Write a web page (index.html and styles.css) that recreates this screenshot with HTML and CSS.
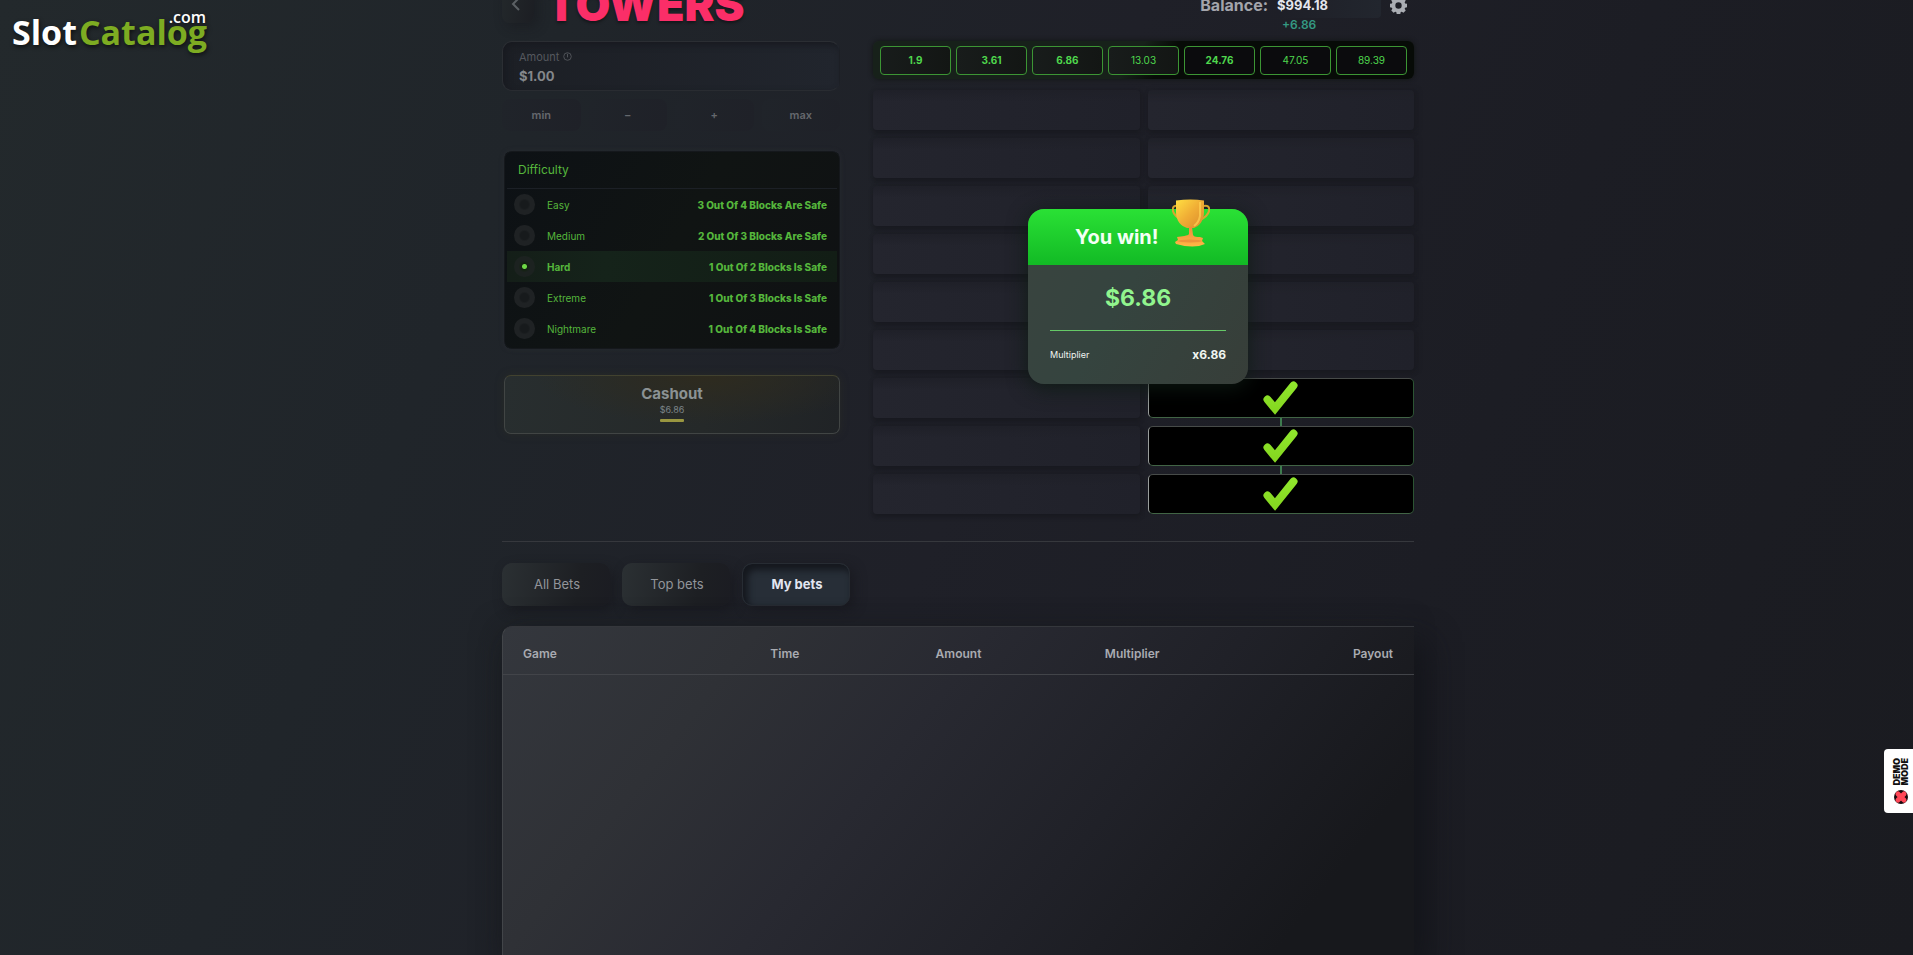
FILE: index.html
```html
<!DOCTYPE html>
<html lang="en">
<head>
<meta charset="utf-8">
<title>Towers</title>
<link rel="stylesheet" href="styles.css">
</head>
<body>
<a class="brand" href="#"><span class="brand-slot">Slot</span><span class="brand-catalog">Catalog</span><span class="brand-com">.com</span></a>

<main class="page">
  <header class="top">
    <button class="back" type="button" aria-label="Back"><svg viewBox="0 0 10 14" width="10" height="14"><path d="M8 1 2 7l6 6" fill="none" stroke="#5b6064" stroke-width="2"/></svg></button>
    <h1 class="title">TOWERS</h1>
    <div class="balance">
      <span class="balance-label">Balance:</span>
      <span class="balance-value">$994.18<span class="balance-gain">+6.86</span></span>
      <button class="gear" type="button" aria-label="Settings"><svg viewBox="0 0 16 16" width="17" height="17"><path fill="#aaadb3" fill-rule="evenodd" d="M6.300 0h3.400l.4 1.800 1 .4L12.700 1.200l2.100 2.100L13.800 5l.4 1 1.800.4v3.200l-1.800.4-.4 1 1 1.700-2.100 2.100L11 13.800l-.9.4-.4 1.800H6.300l-.4-1.800-.9-.4-1.700 1-2.100-2.100 1-1.700-.4-1L0 9.600V6.400L1.800 6l.4-1-1-1.700 2.100-2.100L5 2.200l.9-.4zM8 5a3 3 0 1 0 0 6 3 3 0 0 0 0-6z"/></svg></button>
    </div>
  </header>

  <section class="game">
    <form class="controls">
      <div class="amount">
        <label class="amount-label" for="amount">Amount <svg viewBox="0 0 10 10" width="9" height="9"><circle cx="5" cy="5" r="4.200" fill="none" stroke="currentColor"/><path d="M5 2v4" stroke="currentColor"/></svg></label>
        <input class="amount-input" id="amount" type="text" value="$1.00">
      </div>
      <div class="steps">
        <button class="step" type="button">min</button>
        <button class="step" type="button">−</button>
        <button class="step" type="button">+</button>
        <button class="step" type="button">max</button>
      </div>
      <fieldset class="difficulty">
        <legend class="difficulty-title">Difficulty</legend>
        <label class="level"><input type="radio" name="level"><span class="level-name">Easy</span><span class="level-odds">3 Out Of 4 Blocks Are Safe</span></label>
        <label class="level"><input type="radio" name="level"><span class="level-name">Medium</span><span class="level-odds">2 Out Of 3 Blocks Are Safe</span></label>
        <label class="level level-on"><input type="radio" name="level" checked><span class="level-name">Hard</span><span class="level-odds">1 Out Of 2 Blocks Is Safe</span></label>
        <label class="level"><input type="radio" name="level"><span class="level-name">Extreme</span><span class="level-odds">1 Out Of 3 Blocks Is Safe</span></label>
        <label class="level"><input type="radio" name="level"><span class="level-name">Nightmare</span><span class="level-odds">1 Out Of 4 Blocks Is Safe</span></label>
      </fieldset>
      <button class="cashout" type="button"><span class="cashout-title">Cashout</span><span class="cashout-sum">$6.86</span><span class="cashout-bar"></span></button>
    </form>

    <div class="board">
      <ol class="odds">
        <li class="odd odd-bold">1.9</li><li class="odd odd-bold">3.61</li><li class="odd odd-bold">6.86</li><li class="odd">13.03</li><li class="odd odd-bold">24.76</li><li class="odd">47.05</li><li class="odd">89.39</li>
      </ol>
      <svg class="defs" width="0" height="0"><defs>
        <linearGradient id="leaf" x1="0" y1="0" x2="0" y2="1"><stop offset="0" stop-color="#8fe62c"/><stop offset="1" stop-color="#86d821"/></linearGradient>
        <symbol id="tick" viewBox="0 0 35 32"><path d="M4.500 17.500 12 26.500 30.500 3.500" fill="none" stroke="url(#leaf)" stroke-width="8" stroke-linecap="round" stroke-linejoin="miter"/></symbol>
      </defs></svg>
      <div class="tiles">
        <button class="tile" type="button"></button><button class="tile" type="button"></button>
        <button class="tile" type="button"></button><button class="tile" type="button"></button>
        <button class="tile" type="button"></button><button class="tile" type="button"></button>
        <button class="tile" type="button"></button><button class="tile" type="button"></button>
        <button class="tile" type="button"></button><button class="tile" type="button"></button>
        <button class="tile" type="button"></button><button class="tile" type="button"></button>
        <button class="tile" type="button"></button><button class="tile tile-safe tile-linked" type="button"><svg width="35" height="34"><use href="#tick"/></svg></button>
        <button class="tile" type="button"></button><button class="tile tile-safe tile-linked" type="button"><svg width="35" height="34"><use href="#tick"/></svg></button>
        <button class="tile" type="button"></button><button class="tile tile-safe" type="button"><svg width="35" height="34"><use href="#tick"/></svg></button>
      </div>

      <aside class="win">
        <div class="win-head">
          <h2 class="win-title">You win!</h2>
          <svg class="trophy" viewBox="0 0 38 50" width="38" height="50">
            <defs>
              <linearGradient id="gold" x1="0" y1="0" x2="1" y2="1"><stop offset="0" stop-color="#ffdf42"/><stop offset=".5" stop-color="#f0ad35"/><stop offset="1" stop-color="#d98a2c"/></linearGradient>
              <linearGradient id="base" x1="0" y1="0" x2="0" y2="1"><stop offset="0" stop-color="#f08a3c"/><stop offset="1" stop-color="#ffb845"/></linearGradient>
            </defs>
            <path d="M6 8C0 6-1 13 4 18c2 2 4 3 6 4M32 8c6-2 7 5 2 10-2 2-4 3-6 4" fill="none" stroke="#d8a62f" stroke-width="2"/>
            <path d="M4 2.500Q19 .5 32 2.500L32 14c0 9-5 14-10 16h-7C9 28 4 23 4 14z" fill="url(#gold)"/>
            <path d="M28 4v14c-1 5-3 8-6 10" fill="none" stroke="#ffd152" stroke-width="2" opacity=".7"/>
            <path d="M17 29h3l1 8c1 2 4 2 7 2l3 1-1 3 3 3q-11 5-29 0l-1-2 3-2-1-3c5-1 11-1 12-3z" fill="url(#base)"/>
            <ellipse cx="18" cy="43" rx="12" ry="1.500" fill="#e98938" opacity=".7"/>
          </svg>
        </div>
        <div class="win-body">
          <p class="win-sum">$6.86</p>
          <p class="win-row"><span class="win-label">Multiplier</span><b class="win-factor">x6.86</b></p>
        </div>
      </aside>
    </div>
  </section>

  <section class="bets">
    <nav class="tabs">
      <button class="tab" type="button">All Bets</button>
      <button class="tab" type="button">Top bets</button>
      <button class="tab tab-on" type="button">My bets</button>
    </nav>
    <div class="sheet">
      <table class="list">
        <thead><tr><th>Game</th><th>Time</th><th>Amount</th><th>Multiplier</th><th>Payout</th></tr></thead>
      </table>
    </div>
  </section>
</main>

<button class="demo" type="button"><span class="demo-text">DEMO<br>MODE</span><svg viewBox="0 0 14 14" width="14" height="14"><circle cx="7" cy="7" r="7" fill="#17090c"/><path d="M4 4l6 6M10 4l-6 6" stroke="#ff4757" stroke-width="5" stroke-linecap="round"/></svg></button>
</body>
</html>
```
FILE: styles.css
```css
* { box-sizing: border-box; }

body {
  margin: 0;
  height: 100vh;
  overflow: hidden;
  padding-left: 3px;
  font-family: Inter, "Open Sans", sans-serif;
  font-size: 12px;
  color: #b5b7bd;
  background: linear-gradient(112deg, #23292c 0%, #20252a 25%, #1f2028 50%, #1c1d24 72%, #1a1b20 100%);
}

button, input { font: inherit; color: inherit; border: 0; background: none; padding: 0; }
h1, h2, p, ol { margin: 0; padding: 0; }

.brand {
  position: absolute;
  left: 12px;
  top: 9px;
  font: 700 34px/46px "Open Sans", sans-serif;
  color: #fff;
  text-decoration: none;
  text-shadow: 1px 2px 4px #0009;
  display: flex;
  gap: 2px;
}
.brand-catalog { color: #7dac22; }
.brand-com { position: absolute; right: 1px; top: -2px; font-size: 16px; line-height: 20px; font-weight: 600; }

.page {
  max-width: 912px;
  height: calc(100vh + 22px);
  margin: -22px auto 0;
  display: flex;
  flex-direction: column;
}

.top { height: 54px; display: flex; align-items: center; flex: none; }
.back {
  width: 32px;
  height: 36px;
  border-radius: 8px;
  text-align: left;
  padding-left: 9px;
  background: linear-gradient(100deg, #23282b, #1c1e23);
  box-shadow: 4px 4px 12px #14151966;
}
.title { margin-left: 14px; color: #fb2e68; font-size: 45px; line-height: 54px; font-weight: 900; text-shadow: 0 2px 3px #0006; margin-left: 12px; }
.balance { margin-left: auto; display: flex; align-items: center; padding-right: 7px; font-weight: 700; }
.balance-label { font-size: 16px; color: #a3a5ac; }
.balance-value { position: relative; width: 104px; margin: 0 9px; font-size: 13px; line-height: 26px; color: #e4e6ed; border-radius: 4px; background: linear-gradient(90deg, #1e1f27, #22262e); }
.balance-gain { position: absolute; left: 5px; top: 20px; font-size: 12px; line-height: 26px; font-weight: 600; color: #349982; }
.gear { display: flex; }

.game { display: grid; grid-template-columns: 338fr 542fr; gap: 32px; margin-top: 9px; padding-bottom: 27px; border-bottom: 1px solid #36383d; }

.amount {
  height: 50px;
  padding: 8px 16px;
  border-radius: 10px;
  border: 1px solid #2b2e33;
  border-right-color: transparent;
  border-bottom-color: #292c31;
  background: linear-gradient(90deg, #1c1f25, #21252d);
  box-shadow: inset 3px 3px 6px #181a20;
  display: flex;
  flex-direction: column;
}
.amount-label { font-size: 11px; line-height: 14px; color: #55585e; }
.amount-input { font-size: 13px; line-height: 16px; margin-top: 4px; width: 100%; font-weight: 700; color: #84878b; }
.steps { display: grid; grid-template-columns: repeat(4, 1fr); gap: 8px; margin-top: 8px; }
.step { height: 32px; border-radius: 8px; font-size: 11px; font-weight: 600; color: #65686d; background: linear-gradient(100deg, #20242a, #1f2128); }

.difficulty {
  margin: 20px 0 0 2px;
  padding: 0 2px 4px;
  min-width: 0;
  border: 1px solid #15181c;
  border-radius: 8px;
  color: #55b63c;
  background: linear-gradient(120deg, #0d1115, #101413 50%, #0f1113);
  box-shadow: 0 0 4px 1px #30343855;
}
.difficulty-title { float: left; width: 100%; padding: 0 11px; font-size: 12px; line-height: 36px; border-bottom: 1px solid #1c2026; }
.level { clear: both; display: flex; align-items: center; height: 31px; padding: 0 10px 0 7px; font-size: 10px; }
.level input {
  appearance: none;
  width: 21px;
  height: 21px;
  margin: 0 12px 0 0;
  border-radius: 50%;
  background: radial-gradient(circle, #171a1c 0 4px, #1f2224 6px);
}
.level input:checked { background: radial-gradient(circle, #6ed846 0 2px, #12220f 3px, #1c2220 6px); }
.level-odds { margin-left: auto; font-weight: 800; }
.level-on { background: linear-gradient(90deg, #141e18, #15231a 30%, #121d15); }
.level-on .level-name { font-weight: 700; }

.cashout {
  display: flex;
  flex-direction: column;
  align-items: center;
  width: calc(100% - 2px);
  height: 59px;
  margin: 26px 0 0 2px;
  padding-top: 8px;
  border: 1px solid #414544;
  border-top-color: #42422f;
  border-radius: 7px;
  background: radial-gradient(ellipse at 60% 0, #2e2b1f, transparent 60%), linear-gradient(100deg, #282e2f, #252929 60%, #202326);
  box-shadow: 0 0 10px #3b3b2144;
}
.cashout-title { font-size: 15px; line-height: 20px; font-weight: 700; color: #8b9294; }
.cashout-sum { font-size: 9px; line-height: 12px; color: #7c8589; }
.cashout-bar { width: 24px; height: 3px; margin-top: 3px; border-radius: 1px; background: #999640; }

.board { position: relative; padding-left: 1px; }
.defs { position: absolute; }
.odds {
  display: grid;
  grid-template-columns: repeat(7, 1fr);
  gap: 5px;
  padding: 5px 7px 4px;
  border-radius: 6px;
  list-style: none;
  background: linear-gradient(125deg, #17211a 0 48%, #070b07 54%);
  box-shadow: 0 0 5px #101312;
}
.odd { border: 1px solid #3c9534; border-radius: 4px; height: 29px; line-height: 27px; font-size: 10px; text-align: center; color: #4fd74d; background: linear-gradient(90deg, #181c1b, #131614); }
.odd-bold { font-weight: 700; }
.odd:nth-child(n+5) { background: #0b0b0d; }
.tiles { display: grid; grid-template-columns: 1fr 1fr; gap: 8px; margin-top: 11px; }
.tile { height: 40px; position: relative; border-radius: 4px; background: linear-gradient(180deg, #1f2028, transparent 12px), linear-gradient(90deg, #24252e, #20212a); box-shadow: 0 3px 4px #191a20, 3px 0 5px #1a1b2299; }
.tile-safe {
  border: 1px solid #555;
  border-color: #474b49 #2c5433 #416445 #9a9e9c;
  border-radius: 5px;
  background: #000;
  box-shadow: none;
  display: flex;
  justify-content: center;
  align-items: center;
}
.tile-linked::after { content: ""; position: absolute; left: calc(50% - 1px); top: 39px; width: 2px; height: 8px; background: #3d7b4e; }

.win {
  position: absolute;
  left: 156px;
  top: 168px;
  width: 220px;
  border-radius: 16px;
  background: linear-gradient(120deg, #3a443f, #35443f 45%, #373e39);
  box-shadow: 0 4px 20px #0d1a13dd;
}
.win-head { position: relative; height: 56px; padding-left: 47px; border-radius: 16px 16px 0 0; background: linear-gradient(#2ae135, #12ba25); }
.win-title { font-size: 20px; line-height: 56px; font-weight: 700; color: #f3fff4; }
.trophy { position: absolute; left: 144px; top: -11px; }
.win-body { padding: 17px 22px 11px; }
.win-sum { padding-bottom: 16px; border-bottom: 1px solid #65c967; font-size: 23px; line-height: 32px; font-weight: 700; text-align: center; color: #91f58e; }
.win-row { display: flex; justify-content: space-between; align-items: center; height: 38px; margin-top: 4px; color: #f0f5f1; }
.win-label { font-size: 9px; }
.win-factor { font-size: 12px; }

.bets { flex: 1; display: flex; flex-direction: column; padding-top: 21px; }
.tabs { display: flex; gap: 12px; }
.tab { width: 108px; height: 43px; padding: 0 0 2px 2px; border-radius: 10px; font-size: 13px; color: #92959a; background: linear-gradient(100deg, #2b3033, #1d1f23 70%, #1b1c22); box-shadow: 4px 5px 12px #15161b99; }
.tab-on { font-weight: 700; color: #e2e6f1; border: 1px solid #272c33; background: #272e37; box-shadow: inset 4px 5px 6px 1px #15181e, 4px 4px 12px #15161b99; }
.sheet {
  flex: 1;
  margin-top: 20px;
  border: 0 solid #424549;
  border-width: 1px 0 0 1px;
  border-top-color: #35373c;
  border-radius: 10px 0 0 0;
  background: linear-gradient(128deg, #34373d 0%, #2f3136 22%, #282931 42%, #202128 64%, #17181c 88%);
  box-shadow: 12px 16px 32px #121318cc, -6px 0 24px #1c1f2399;
}
.list { width: 100%; table-layout: fixed; border-collapse: collapse; }
.list thead { border-bottom: 1px solid #424449; }
.list th { height: 47px; padding: 6px 0 0; font-size: 12px; font-weight: 600; color: #a9abb1; }
.list th:first-child { width: 21.4%; text-align: left; padding-left: 20px; }
.list th:last-child { width: 21.4%; text-align: right; padding-right: 21px; }

.demo {
  position: absolute;
  right: 0;
  top: 749px;
  width: 29px;
  height: 64px;
  display: flex;
  flex-direction: column;
  align-items: center;
  justify-content: center;
  gap: 4px;
  padding-left: 5px;
  border-radius: 4px 0 0 4px;
  background: #fff;
  color: #111;
}
.demo-text { writing-mode: sideways-lr; font-size: 9px; line-height: 8px; font-weight: 900; text-align: left; }
```
